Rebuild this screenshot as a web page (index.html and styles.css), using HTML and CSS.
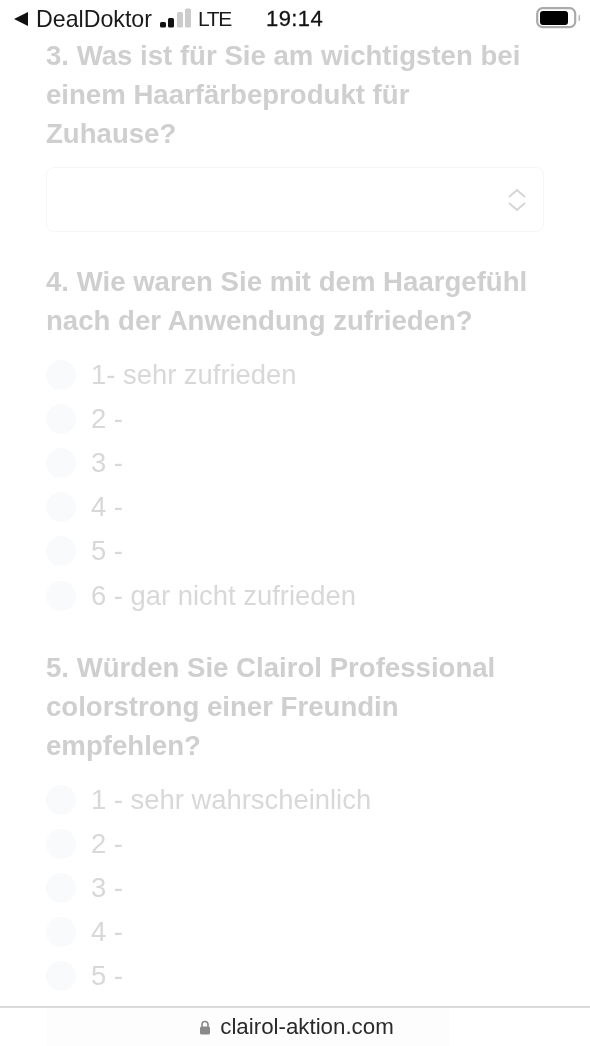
FILE: index.html
```html
<!DOCTYPE html>
<html lang="de">
<head>
<meta charset="utf-8">
<title>clairol-aktion.com</title>
<link rel="stylesheet" href="styles.css">
</head>
<body>
<div class="screen">
  <header class="status">
    <svg class="back" viewBox="0 0 14 14" width="14" height="14"><path d="M0 7 14 0V14Z" fill="#111"/></svg>
    <span class="app">DealDoktor</span>
    <svg class="signal" viewBox="0 0 31 20" width="31" height="20">
      <rect x="0" y="14" width="6" height="5.5" rx="1.5" fill="#111"/>
      <rect x="8" y="10" width="6" height="9.5" rx="1.5" fill="#111"/>
      <rect x="17" y="4" width="6" height="15.5" rx="1.5" fill="#ccc"/>
      <rect x="25" y="0.5" width="6" height="19" rx="1.5" fill="#ccc"/>
    </svg>
    <span class="net">LTE</span>
    <span class="time">19:14</span>
    <svg class="battery" viewBox="0 0 46 22" width="46" height="22">
      <rect x="1.2" y="1.2" width="38" height="19" rx="5.5" fill="none" stroke="#aaa" stroke-width="2.2"/>
      <rect x="4" y="4" width="28" height="14" rx="3" fill="#000"/>
      <rect x="42.5" y="8" width="1.6" height="6" rx=".8" fill="#bbb"/>
    </svg>
  </header>
  <main class="form">
    <section class="question">
      <h2>3. Was ist für Sie am wichtigsten bei einem Haarfärbeprodukt für Zuhause?</h2>
      <div class="select">
        <svg viewBox="0 0 20 24" width="20" height="24"><path d="M2 9 10 2l8 7M2 15l8 7 8-7" fill="none" stroke="#d4d4d4" stroke-width="1.8"/></svg>
      </div>
    </section>
    <section class="question">
      <h2>4. Wie waren Sie mit dem Haargefühl nach der Anwendung zufrieden?</h2>
      <ul class="options">
        <li><i></i>1- sehr zufrieden</li>
        <li><i></i>2 -</li>
        <li><i></i>3 -</li>
        <li><i></i>4 -</li>
        <li><i></i>5 -</li>
        <li><i></i>6 - gar nicht zufrieden</li>
      </ul>
    </section>
    <section class="question">
      <h2>5. Würden Sie Clairol Professional colorstrong einer Freundin empfehlen?</h2>
      <ul class="options">
        <li><i></i>1 - sehr wahrscheinlich</li>
        <li><i></i>2 -</li>
        <li><i></i>3 -</li>
        <li><i></i>4 -</li>
        <li><i></i>5 -</li>
      </ul>
    </section>
  </main>
  <footer class="urlbar">
    <svg class="lock" viewBox="0 0 12 15" width="12" height="15"><path d="M3 7V4.5a3 3 0 0 1 6 0V7" fill="none" stroke="#8a8a8a" stroke-width="1.6"/><rect x="1" y="6.5" width="10" height="8" rx="1.5" fill="#8a8a8a"/></svg>
    <span>clairol-aktion.com</span>
  </footer>
</div>
</body>
</html>
```

FILE: styles.css
```css
* { box-sizing: border-box; }
html, body { margin: 0; padding: 0; background: #fff; }
body { font-family: "Liberation Sans", Arial, sans-serif; }
.screen {
  width: 590px;
  height: 1046px;
  display: flex;
  flex-direction: column;
  overflow: hidden;
  filter: blur(0.5px);
}
.status {
  flex: none;
  height: 36px;
  display: flex;
  align-items: center;
  padding: 2px 8px 0 14px;
  font-size: 21px;
  color: #1a1a1a;
}
.back { margin-right: 8px; }
.app { width: 124px; font-size: 23.2px; }
.signal { margin: 0 7px 2px 0; }
.net { width: 68px; letter-spacing: -1.4px; }
.time { font-size: 22px; letter-spacing: .4px; -webkit-text-stroke: .3px #1a1a1a; color: #111; }
.battery { margin-left: auto; margin-bottom: 2px; }
.form {
  flex: 1;
  min-height: 0;
  overflow: hidden;
  padding: 0 46px;
  display: flex;
  flex-direction: column;
  gap: 30px;
}
.question { flex: none; }
h2 {
  margin: 0;
  font-size: 27.6px;
  line-height: 39px;
  font-weight: 700;
  color: #cfcfcf;
}
.select {
  margin-top: 14px;
  height: 65px;
  border: 1.5px solid #f5f5f5;
  border-radius: 8px;
  display: flex;
  align-items: center;
  justify-content: flex-end;
  padding-right: 16px;
}
.options {
  list-style: none;
  margin: 13px 0 0;
  padding: 0;
}
.options li {
  height: 44.1px;
  display: flex;
  align-items: center;
  gap: 15px;
  font-size: 27.4px;
  color: #d8d8d8;
}
.options i {
  width: 30px;
  height: 30px;
  border-radius: 50%;
  background: #f9fafb;
}
.urlbar {
  flex: none;
  height: 40px;
  border-top: 2px solid #d9d9d9;
  display: flex;
  align-items: center;
  justify-content: center;
  gap: 9px;
  padding-left: 3px;
  font-size: 22.3px;
  color: #2a2a2a;
  background: linear-gradient(#fdfdfd, #fdfdfd) 46px 0 / 404px 100% no-repeat;
}
```
